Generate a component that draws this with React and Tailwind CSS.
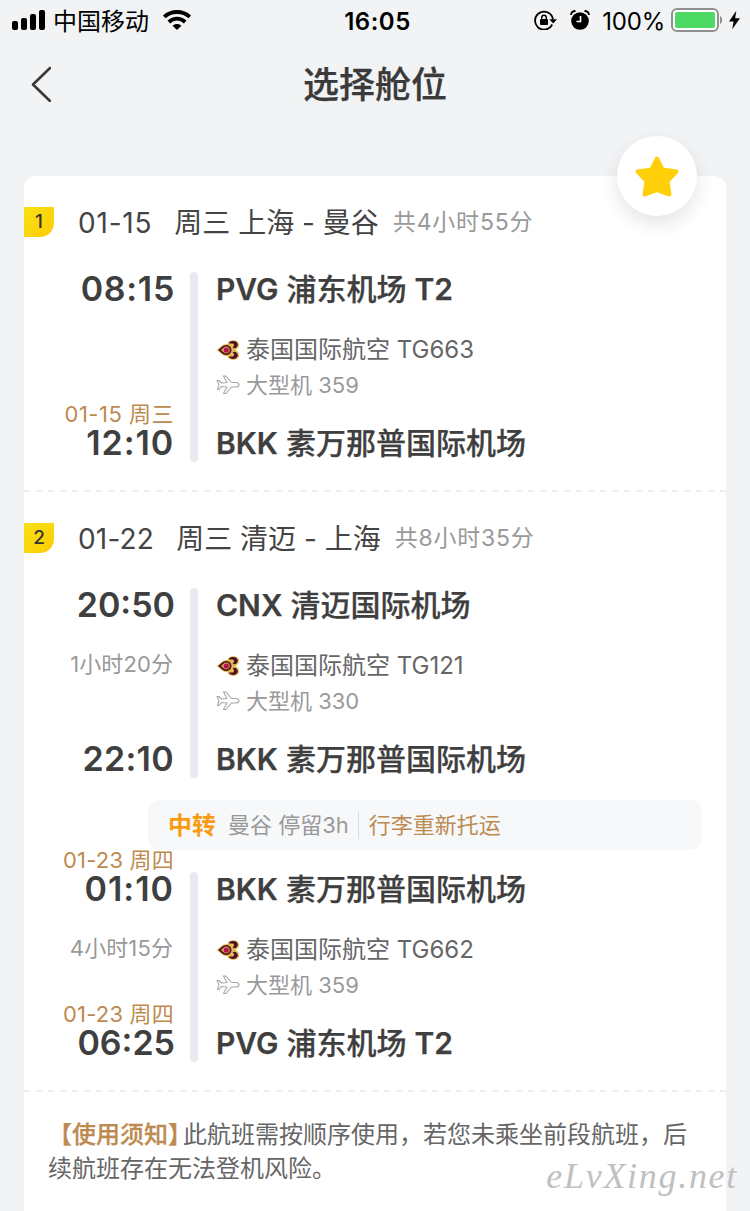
import React from "react";

const sans = "font-['Inter','Noto_Sans_CJK_SC',sans-serif]";

function ThaiLogo() {
  return (
    <svg className="mr-1.5 h-6 w-6 shrink-0" viewBox="0 0 24 24">
      <path d="M0.500 12C4.500 9.500 6.500 5.500 11.500 6C12 1 22.500 0.500 23 6.500C23.300 9.500 21 11 19.500 12C21 13 23.300 14.500 23 17.500C22.500 23.500 12 23 11.500 18C6.500 18.500 4.500 14.500 0.500 12Z" fill="#e8bb50" />
      <path d="M2 12C5 10 7 6.800 10.500 7C14 7.200 15.500 10 15.500 12C15.500 14 14 16.800 10.500 17C7 17.200 5 14 2 12Z" fill="#48122a" />
      <path d="M12.800 5C15 2 21.500 2.500 21.800 6.500C22 10 17.500 11.300 16.700 9.500C17.500 8.500 19 7.500 17.500 6C16 4.800 14.500 6.200 12.800 5Z" fill="#48122a" />
      <path d="M12.800 19C15 22 21.500 21.500 21.800 17.500C22 14 17.500 12.700 16.700 14.500C17.500 15.500 19 16.500 17.500 18C16 19.200 14.500 17.800 12.800 19Z" fill="#48122a" />
      <path d="M5 12C7 10.500 8 8.600 10.300 8.600C12.700 8.600 13.800 10.500 13.800 12C13.800 13.500 12.700 15.400 10.300 15.400C8 15.400 7 13.500 5 12Z" fill="#e0a54a" />
      <circle cx="10.300" cy="12" r="2.600" fill="#b5144c" />
    </svg>
  );
}

function PlaneIcon() {
  return (
    <svg className="mr-1.5 h-6 w-6 shrink-0" viewBox="0 0 24 24" fill="none" stroke="#a3a8a3" strokeWidth="1.100" strokeLinejoin="round">
      <path d="M1 7.500H3L5.500 10L11 9.500L7.500 3H10L15.500 9.500H20C24 10 24 13.500 20 14H15.500L10 20.500H7.500L11 14L5.500 13.500L3 16.500H1.500L3 12Z" />
    </svg>
  );
}

function Heading({ no, date, dateTracking, route, total }) {
  return (
    <div className="flex h-[30px] items-center">
      <div className="flex h-[30px] w-[30px] items-center justify-center rounded-br-[14px] bg-linear-to-br from-[#f7e112] to-[#ffcb05] text-[19px] font-medium text-[#333]">{no}</div>
      <div className={`mt-0.5 ml-6 whitespace-nowrap text-[28px] text-[#444] ${dateTracking}`}>{date}</div>
      <div className="mt-0.5 ml-[22px] whitespace-nowrap text-[28px] text-[#444]">{route}</div>
      <div className="ml-[14px] whitespace-nowrap text-[23px] tracking-[0.8px] text-[#999]">{total}</div>
    </div>
  );
}

function Time({ value, tracking = "tracking-[0.1px]" }) {
  return (
    <div className={`h-8 text-[34px] leading-[34px] font-semibold text-[#3f3f3f] ${tracking}`}>{value}</div>
  );
}

function Airport({ code, name, className = "" }) {
  return (
    <div className={`h-9 text-[30px] leading-[34px] font-medium text-[#3f3f3f] [-webkit-text-stroke:0.25px_#3f3f3f] ${className}`}>
      <span className="font-semibold">{code}</span> {name}
    </div>
  );
}

function Leg({ depDate, dep, depTracking, duration, arrDate, arr, arrTracking, dateTracking = "tracking-[0.2px]", from, to, flight, plane }) {
  return (
    <div className="flex h-[190px] whitespace-nowrap">
      <div className="-mt-6 flex w-[150px] shrink-0 flex-col items-end">
        <div className={`h-6 text-[22px] leading-6 text-[#bd8b50] ${dateTracking}`}>{depDate}</div>
        <Time value={dep} tracking={depTracking} />
        <div className="mt-8 mr-px h-6 text-[22px] leading-[25px] tracking-[0.1px] text-[#999]">{duration}</div>
        <div className={`mt-[42px] h-6 text-[22px] leading-6 text-[#bd8b50] ${dateTracking}`}>{arrDate}</div>
        <Time value={arr} tracking={arrTracking} />
      </div>
      <div className="ml-4 w-2 shrink-0 rounded-full bg-[#e9eaef]" />
      <div className="ml-[18px]">
        <Airport {...from} />
        <div className="mt-6 flex h-9 items-center text-[24px] text-[#666]"><ThaiLogo />{flight}</div>
        <div className="flex h-[34px] items-center text-[22px] text-[#999]"><PlaneIcon />{plane}</div>
        <Airport className="mt-6" {...to} />
      </div>
    </div>
  );
}

function Divider() {
  return (
    <svg className="mt-7 block h-0.5 w-full" viewBox="0 0 702 2">
      <path d="M0 1H702" stroke="#eceef0" strokeWidth="2" strokeDasharray="6 6" />
    </svg>
  );
}

function StatusBar() {
  return (
    <div className="grid h-10 grid-cols-[1fr_auto_1fr] items-center text-black">
      <div className="flex items-center pl-3">
        <svg className="h-5 w-[33px]" viewBox="0 0 33 20">
          <rect x="0" y="11" width="6" height="9" rx="2" />
          <rect x="9" y="8" width="6" height="12" rx="2" />
          <rect x="18" y="4" width="6" height="16" rx="2" />
          <rect x="27" y="0" width="6" height="20" rx="2" />
        </svg>
        <span className="mt-[3px] ml-2 text-[24px]">中国移动</span>
        <svg className="ml-[14px] h-5 w-7" viewBox="0 0 28 20" fill="none" stroke="black" strokeWidth="3.800">
          <path d="M1.300 7C8 .3 20 .3 26.700 7" />
          <path d="M5.800 12C10.500 7.600 17.500 7.600 22.200 12" />
          <path d="M14 20L9.600 15.800C12 13.400 16 13.400 18.400 15.800Z" fill="black" stroke="none" />
        </svg>
      </div>
      <div className="mt-[3px] ml-[5px] text-[24px] font-semibold tracking-[0.5px]">16:05</div>
      <div className="flex items-center justify-end pr-[10px]">
        <svg className="h-5 w-[23px]" viewBox="0 0 23 20">
          <path d="M18.200 14.500A9 9 0 1 1 19 9.500" fill="none" stroke="black" strokeWidth="1.800" />
          <path d="M15.300 9.300H23L19.200 13.500Z" />
          <rect x="6" y="9" width="8" height="6" rx="1" />
          <path d="M7.700 9V7.500a2.300 2.300 0 0 1 4.600 0V9" fill="none" stroke="black" strokeWidth="1.400" />
        </svg>
        <svg className="ml-[13px] h-5 w-5" viewBox="0 0 20 20">
          <circle cx="10" cy="11" r="8.800" />
          <path d="M1 5C1.200 2.500 3 1 5.500 1M19 5C18.800 2.500 17 1 14.500 1" fill="none" stroke="black" strokeWidth="1.800" />
          <path d="M10.500 6V11.500H6.500" fill="none" stroke="white" strokeWidth="1.600" />
        </svg>
        <span className="mt-[3px] ml-3 text-[24px] tracking-[-0.2px]">100%</span>
        <svg className="ml-1.5 h-6 w-[51px]" viewBox="0 0 51 24">
          <rect x="1" y="1" width="46" height="22" rx="5" fill="#fff" stroke="#8e9092" strokeWidth="2" />
          <rect x="4" y="4" width="40" height="16" rx="2" fill="#4cd964" />
          <path d="M49 8C52 9.500 52 14.500 49 16Z" fill="#8e9092" />
        </svg>
        <svg className="ml-[7px] h-5 w-[11px]" viewBox="0 0 12 20"><path d="M8 0L0 11.500H5L3.500 20L12 8H6.700Z" /></svg>
      </div>
    </div>
  );
}

const BKK = { code: "BKK", name: "素万那普国际机场" };
const PVG = { code: "PVG", name: <>浦东机场 <span className="font-semibold">T2</span></> };
const CNX = { code: "CNX", name: "清迈国际机场" };

export default function App() {
  return (
    <div className={`${sans} flex h-[1211px] w-[750px] flex-col overflow-hidden bg-[#f1f3f5]`}>
      <StatusBar />
      <header className="grid h-[88px] grid-cols-[1fr_auto_1fr] items-center">
        <svg className="ml-[31px] h-9 w-5" viewBox="0 0 20 36" fill="none" stroke="#3a3a3a" strokeWidth="2.600" strokeLinecap="round" strokeLinejoin="round"><path d="M19 2L2 18.500L19 35" /></svg>
        <h1 className="mt-0.5 text-[36px] leading-none font-medium text-[#3a3a3a] [-webkit-text-stroke:0.25px_#3a3a3a]">选择舱位</h1>
      </header>
      <main className="relative mx-6 mt-12 flex-1 rounded-t-xl bg-white pt-[31px]">
        <div className="absolute -top-10 right-[29px] flex h-20 w-20 items-center justify-center rounded-full bg-white shadow-[0_8px_18px_rgba(60,40,60,0.12)]">
          <svg className="h-[46px] w-[46px]" viewBox="0 0 46 46"><path d="M23 5.500L28.500 16.500L42.500 18.500L33.500 28L35.500 41.500L23 37L10.500 41.500L12.500 28L3.500 18.500L17.500 16.500Z" fill="#ffcf0a" stroke="#ffcf0a" strokeWidth="4" strokeLinejoin="round" /></svg>
        </div>
        <Heading no="1" date="01-15" dateTracking="tracking-[0.8px]" route="周三 上海 - 曼谷" total="共4小时55分" />
        <div className="mt-[35px]">
          <Leg dep="08:15" depTracking="tracking-[0.7px] -mr-px" dateTracking="tracking-[0.5px]" arrDate="01-15 周三" arr="12:10" arrTracking="tracking-[0.9px]" from={PVG} to={BKK} flight="泰国国际航空 TG663" plane="大型机 359" />
        </div>
        <Divider />
        <div className="mt-[31px]">
          <Heading no="2" date="01-22" dateTracking="tracking-[0.2px]" route="周三 清迈 - 上海" total="共8小时35分" />
        </div>
        <div className="mt-[35px]">
          <Leg dep="20:50" depTracking="tracking-[0px] -mr-px" duration="1小时20分" arr="22:10" arrTracking="tracking-[0.3px]" from={CNX} to={BKK} flight="泰国国际航空 TG121" plane="大型机 330" />
        </div>
        <div className="mt-[22px] mr-6 mb-[22px] ml-[124px] flex h-[50px] items-center rounded-xl bg-[#f6f8fa] pl-5 whitespace-nowrap">
          <span className="mt-0.5 text-[24px] font-bold text-[#f99b13]">中转</span>
          <span className="ml-3 text-[22px] text-[#999]">曼谷 停留3h</span>
          <span className="mr-2.5 ml-[9px] h-7 w-px bg-[#d9dbde]" />
          <span className="text-[22px] text-[#bd8b50]">行李重新托运</span>
        </div>
        <Leg depDate="01-23 周四" dep="01:10" depTracking="tracking-[1px]" duration="4小时15分" arrDate="01-23 周四" arr="06:25" arrTracking="tracking-[0px] -mr-px" from={BKK} to={PVG} flight="泰国国际航空 TG662" plane="大型机 359" />
        <Divider />
        <p className="mt-[26px] pl-6 text-[24px] leading-[34px] whitespace-nowrap text-[#666]">
          <b className="mr-[-9px] font-medium text-[#bd8b50] [-webkit-text-stroke:0.25px_#bd8b50]">【使用须知】</b>此航班需按顺序使用，若您未乘坐前段航班，后<br />续航班存在无法登机风险。
        </p>
        <div className="absolute right-[-12px] bottom-[17px] font-['Liberation_Serif',serif] text-[36px] leading-none tracking-[1.700px] text-[#bfc0c2] italic">eLvXing.net</div>
      </main>
    </div>
  );
}
